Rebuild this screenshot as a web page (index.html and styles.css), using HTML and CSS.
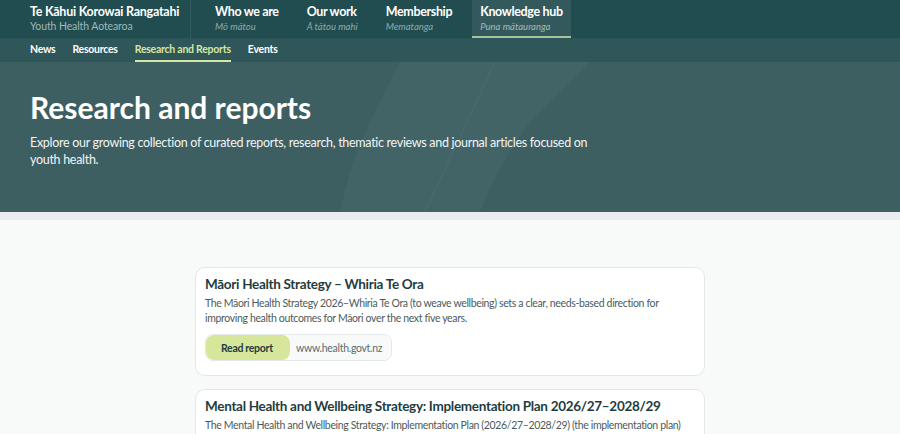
FILE: index.html
```html
<!DOCTYPE html>
<html lang="en">
<head>
<meta charset="utf-8">
<title>Research and reports – Te Kāhui Korowai Rangatahi</title>
<link rel="stylesheet" href="styles.css">
</head>
<body>
<header class="site-header">
  <div class="topbar">
    <a class="brand" href="#">
      <span class="brand-name">Te Kāhui Korowai Rangatahi</span>
      <span class="brand-sub">Youth Health Aotearoa</span>
    </a>
    <nav class="main-nav">
      <a class="main-link" href="#"><span class="en">Who we are</span><span class="mi">Mō mātou</span></a>
      <a class="main-link" href="#"><span class="en">Our work</span><span class="mi">Ā tātou mahi</span></a>
      <a class="main-link" href="#"><span class="en">Membership</span><span class="mi">Mematanga</span></a>
      <a class="main-link is-active" href="#"><span class="en">Knowledge hub</span><span class="mi">Puna mātauranga</span></a>
    </nav>
  </div>
  <nav class="subnav">
    <a href="#">News</a>
    <a href="#">Resources</a>
    <a class="is-active" href="#">Research and Reports</a>
    <a href="#">Events</a>
  </nav>
</header>

<section class="hero">
  <svg class="hero-mark" viewBox="0 0 300 150" aria-hidden="true">
    <path d="M100 0 L290 0 L230 60 Q200 100 180 150 L40 150 Q50 100 70 60 Z" fill="#ffffff" opacity="0.03"/>
    <path d="M125 150 L195 0" stroke="#ffffff" stroke-opacity="0.03" stroke-width="1.5" fill="none"/>
  </svg>
  <div class="hero-inner">
    <h1>Research and reports</h1>
    <p>Explore our growing collection of curated reports, research, thematic reviews and journal articles focused on youth health.</p>
  </div>
</section>
<div class="band"></div>

<main class="list">
  <article class="card">
    <h2>Māori Health Strategy – Whiria Te Ora</h2>
    <p>The Māori Health Strategy 2026–Whiria Te Ora (to weave wellbeing) sets a clear, needs-based direction for improving health outcomes for Māori over the next five years.</p>
    <div class="actions">
      <a class="btn-read" href="#">Read report</a>
      <span class="source">www.health.govt.nz</span>
    </div>
  </article>
  <article class="card">
    <h2>Mental Health and Wellbeing Strategy: Implementation Plan 2026/27–2028/29</h2>
    <p>The Mental Health and Wellbeing Strategy: Implementation Plan (2026/27–2028/29) (the implementation plan) sets out the actions that will be taken over the next three years.</p>
    <div class="actions">
      <a class="btn-read" href="#">Read report</a>
      <span class="source">www.health.govt.nz</span>
    </div>
  </article>
</main>
</body>
</html>
```
FILE: styles.css
```css
* { box-sizing: border-box; }

html, body {
  margin: 0;
  background: #f8fafa;
  font-family: Lato, "Noto Sans", sans-serif;
  color: #1f3d40;
}

a { text-decoration: none; color: inherit; }

/* top navigation */
.topbar {
  display: flex;
  height: 39px;
  background: #214d51;
  border-bottom: 1px solid #2b5559;
}

.brand {
  display: flex;
  flex-direction: column;
  width: 191px;
  padding: 3px 0 0 30px;
  border-right: 1px solid #2f5a5e;
  white-space: nowrap;
}

.brand-name {
  font-size: 12.5px;
  font-weight: 700;
  letter-spacing: -0.25px;
  color: #ffffff;
  line-height: 17px;
}

.brand-sub {
  font-size: 10.5px;
  letter-spacing: -0.1px;
  color: #9fb8b8;
  line-height: 13px;
}

.main-nav {
  display: flex;
  gap: 12px;
  padding-left: 16px;
}

.main-link {
  display: flex;
  flex-direction: column;
  padding: 3px 8px 0;
  color: #ffffff;
  white-space: nowrap;
}

.main-link .en {
  font-size: 12.5px;
  font-weight: 700;
  letter-spacing: -0.35px;
  line-height: 17px;
}

.main-link .mi {
  font-size: 9.5px;
  font-style: italic;
  color: #8eaaab;
  line-height: 13px;
}

.main-link.is-active {
  background: #34595c;
  border-bottom: 2px solid #a7c39a;
}

.main-link.is-active .mi { color: #a3b9b9; }

.subnav {
  display: flex;
  gap: 17px;
  height: 23px;
  padding-left: 30px;
  background: #2f5659;
}

.subnav a {
  font-size: 10.5px;
  font-weight: 700;
  letter-spacing: -0.25px;
  color: #ffffff;
  line-height: 21px;
  border-bottom: 2px solid transparent;
  white-space: nowrap;
}

.subnav a.is-active {
  color: #d5e7a2;
  border-bottom-color: #d5e7a2;
}

/* hero */
.hero {
  position: relative;
  overflow: hidden;
  height: 150px;
  background: #3d5f62;
}

.hero-mark {
  position: absolute;
  left: 300px;
  top: 0;
  width: 300px;
  height: 150px;
}

.hero-inner {
  position: relative;
  padding: 27px 30px 0;
}

.hero h1 {
  margin: 0;
  font-size: 30px;
  font-weight: 700;
  color: #ffffff;
  line-height: 36px;
}

.hero p {
  margin: 9px 0 0;
  max-width: 572px;
  font-size: 12.5px;
  letter-spacing: -0.3px;
  line-height: 17px;
  color: #f1f5f5;
}

.band {
  height: 8px;
  background: #e8eeef;
}

/* report list */
.list {
  display: flex;
  flex-direction: column;
  gap: 13px;
  width: 510px;
  margin: 47px auto 0;
}

.card {
  background: #ffffff;
  border: 1px solid #e2e8e8;
  border-radius: 10px;
  padding: 7px 9px 14px;
}

.card h2 {
  margin: 0;
  font-size: 13.5px;
  font-weight: 700;
  letter-spacing: -0.3px;
  line-height: 18px;
  color: #1f3d40;
}

.card p {
  margin: 3px 0 0;
  font-size: 10.5px;
  letter-spacing: -0.35px;
  line-height: 15px;
  color: #4b5b5d;
}

.actions {
  display: inline-flex;
  margin-top: 8px;
  border: 1px solid #e3e8e8;
  border-radius: 8px;
  overflow: hidden;
}

.btn-read {
  display: flex;
  align-items: center;
  width: 84px;
  height: 25px;
  padding-left: 15px;
  background: #d6e69b;
  font-size: 10.5px;
  font-weight: 700;
  letter-spacing: -0.3px;
  color: #1f3d40;
  border-radius: 8px;
}

.source {
  display: flex;
  align-items: center;
  padding: 0 9px 0 6px;
  font-size: 10.5px;
  letter-spacing: -0.3px;
  color: #5d6b6c;
  background: #f8fafa;
}
```
